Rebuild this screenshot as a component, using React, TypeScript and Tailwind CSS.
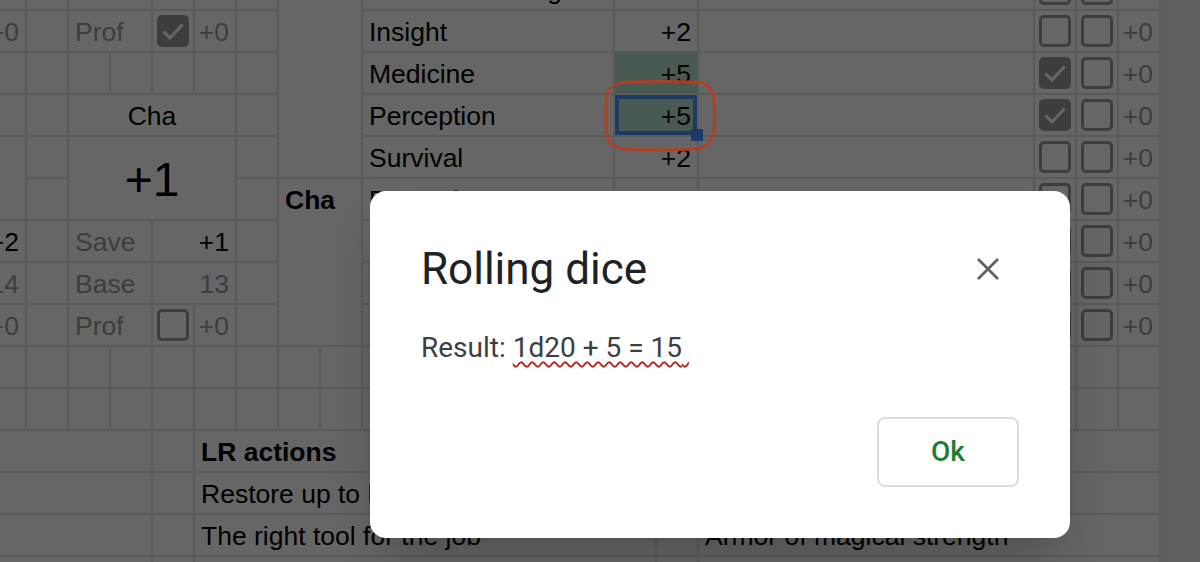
import React from "react";

const cellBase = "border-r-2 border-b-2 border-[#e2e2e2] bg-white min-w-0 overflow-hidden";
const txt = "flex items-end pb-[4px] px-[6px] leading-[30px] whitespace-nowrap";

function Checkbox({ checked }: { checked?: boolean }) {
  return (
    <div
      className={
        checked
          ? "w-[32px] h-[32px] rounded-[5px] border-[3px] border-[#999999] bg-[#999999] flex items-center justify-center"
          : "w-[32px] h-[32px] rounded-[5px] border-[3px] border-[#999999] flex items-center justify-center"
      }
    >
      {checked && (
        <svg width="26" height="26" viewBox="0 0 26 26">
          <path d="M3.5 13.5 L10 20 L22.5 6.5" fill="none" stroke="#ffffff" strokeWidth="3" />
        </svg>
      )}
    </div>
  );
}

function Cell({ className, children }: { className: string; children?: React.ReactNode }) {
  return <div className={`${cellBase} ${className}`}>{children}</div>;
}

function CbCell({ className, checked }: { className: string; checked?: boolean }) {
  return (
    <div className={`${cellBase} flex items-center justify-center ${className}`}>
      <Checkbox checked={checked} />
    </div>
  );
}

function SkillRow({
  row,
  name,
  value,
  c1,
  c2,
}: {
  row: string;
  name: string;
  value: string;
  c1?: boolean;
  c2?: boolean;
}) {
  return (
    <>
      <Cell className={`col-start-10 col-span-6 ${row} ${txt}`}>{name}</Cell>
      <Cell className={`col-start-16 col-span-2 ${row} ${txt} justify-end`}>{value}</Cell>
      <Cell className={`col-start-18 col-span-8 ${row}`} />
      <CbCell className={`col-start-26 ${row}`} checked={c1} />
      <CbCell className={`col-start-27 ${row}`} checked={c2} />
      <Cell className={`col-start-28 ${row} ${txt} justify-end text-[#999999]`}>+0</Cell>
    </>
  );
}

export default function App() {
  const fillers = Array.from({ length: 420 }, (_, i) => (
    <div key={i} className="border-r-2 border-b-2 border-[#e2e2e2] bg-white" />
  ));

  return (
    <div className="relative w-[1200px] h-[562px] overflow-hidden bg-[#eeeeee] font-['Liberation_Sans',Arial,sans-serif] text-[26.5px] text-black">
      <div className="ml-[-15px] mt-[-31px] grid grid-cols-[repeat(28,42px)] auto-rows-[42px] w-max">
        {/* Row 1 (partial) */}
        <Cell className={`col-start-1 row-start-1 ${txt} justify-end text-[#999999]`}>10</Cell>
        <Cell className={`col-start-3 col-span-2 row-start-1 ${txt} text-[#999999]`}>Base</Cell>
        <Cell className={`col-start-6 row-start-1 ${txt} justify-end text-[#999999]`}>+0</Cell>
        <Cell className="col-start-8 col-span-2 row-start-1 row-span-5" />
        <SkillRow row="row-start-1" name="Animal Handling" value="+2" />

        {/* Row 2 */}
        <Cell className={`col-start-1 row-start-2 ${txt} justify-end text-[#999999]`}>+0</Cell>
        <Cell className={`col-start-3 col-span-2 row-start-2 ${txt} text-[#999999]`}>Prof</Cell>
        <CbCell className="col-start-5 row-start-2" checked />
        <Cell className={`col-start-6 row-start-2 ${txt} justify-end text-[#999999]`}>+0</Cell>
        <SkillRow row="row-start-2" name="Insight" value="+2" />

        {/* Row 3 */}
        <Cell className={`col-start-10 col-span-6 row-start-3 ${txt}`}>Medicine</Cell>
        <div className={`border-r-2 border-b-2 border-[#e2e2e2] bg-[#b7e1cd] col-start-16 col-span-2 row-start-3 ${txt} justify-end`}>
          +5
        </div>
        <Cell className="col-start-18 col-span-8 row-start-3" />
        <CbCell className="col-start-26 row-start-3" checked />
        <CbCell className="col-start-27 row-start-3" />
        <Cell className={`col-start-28 row-start-3 ${txt} justify-end text-[#999999]`}>+0</Cell>

        {/* Row 4 */}
        <Cell className={`col-start-3 col-span-4 row-start-4 ${txt} justify-center`}>Cha</Cell>
        <Cell className={`col-start-10 col-span-6 row-start-4 ${txt}`}>Perception</Cell>
        <div className={`relative border-r-2 border-b-2 border-[#e2e2e2] bg-[#b7e1cd] col-start-16 col-span-2 row-start-4 ${txt} justify-end`}>
          +5
          <div className="absolute inset-[0px] border-[4px] border-[#4a8fff]" />
        </div>
        <Cell className="col-start-18 col-span-8 row-start-4" />
        <CbCell className="col-start-26 row-start-4" checked />
        <CbCell className="col-start-27 row-start-4" />
        <Cell className={`col-start-28 row-start-4 ${txt} justify-end text-[#999999]`}>+0</Cell>

        {/* Rows 5-6 merged */}
        <Cell className="col-start-1 row-start-5 row-span-2" />
        <Cell className="col-start-3 col-span-4 row-start-5 row-span-2 flex items-center justify-center pt-[4px] text-[48px] leading-[56px]">
          +1
        </Cell>
        <SkillRow row="row-start-5" name="Survival" value="+2" />

        {/* Cha block */}
        <Cell className="col-start-8 col-span-2 row-start-6 row-span-4">
          <div className={`h-[40px] ${txt} font-bold`}>Cha</div>
        </Cell>
        <SkillRow row="row-start-6" name="Deception" value="+1" />

        {/* Row 7 */}
        <Cell className={`col-start-1 row-start-7 ${txt} justify-end`}>+2</Cell>
        <Cell className={`col-start-3 col-span-2 row-start-7 ${txt} text-[#999999]`}>Save</Cell>
        <Cell className={`col-start-5 col-span-2 row-start-7 ${txt} justify-end`}>+1</Cell>
        <SkillRow row="row-start-7" name="Intimidation" value="+1" />

        {/* Row 8 */}
        <Cell className={`col-start-1 row-start-8 ${txt} justify-end text-[#999999]`}>14</Cell>
        <Cell className={`col-start-3 col-span-2 row-start-8 ${txt} text-[#999999]`}>Base</Cell>
        <Cell className={`col-start-5 col-span-2 row-start-8 ${txt} justify-end text-[#999999]`}>13</Cell>
        <SkillRow row="row-start-8" name="Performance" value="+1" />

        {/* Row 9 */}
        <Cell className={`col-start-1 row-start-9 ${txt} justify-end text-[#999999]`}>+0</Cell>
        <Cell className={`col-start-3 col-span-2 row-start-9 ${txt} text-[#999999]`}>Prof</Cell>
        <CbCell className="col-start-5 row-start-9" />
        <Cell className={`col-start-6 row-start-9 ${txt} justify-end text-[#999999]`}>+0</Cell>
        <SkillRow row="row-start-9" name="Persuasion" value="+1" />

        {/* Rows 12-15 */}
        <Cell className="col-start-1 col-span-4 row-start-12" />
        <Cell className={`col-start-6 col-span-11 row-start-12 ${txt} font-bold`}>LR actions</Cell>
        <Cell className={`col-start-18 col-span-11 row-start-12 ${txt} font-bold`}>Items</Cell>

        <Cell className="col-start-1 col-span-4 row-start-13" />
        <Cell className={`col-start-6 col-span-11 row-start-13 ${txt}`}>Restore up to half your spell slots</Cell>
        <Cell className={`col-start-18 col-span-11 row-start-13 ${txt}`}>Cloak of elvenkind</Cell>

        <Cell className="col-start-1 col-span-4 row-start-14" />
        <Cell className={`col-start-6 col-span-11 row-start-14 ${txt}`}>The right tool for the job</Cell>
        <Cell className={`col-start-18 col-span-11 row-start-14 ${txt}`}>Armor of magical strength</Cell>

        <Cell className="col-start-1 col-span-4 row-start-15" />
        <Cell className="col-start-6 col-span-11 row-start-15" />
        <Cell className="col-start-18 col-span-11 row-start-15" />

        {fillers}
      </div>

      {/* fill handle */}
      <div className="absolute left-[691px] top-[129px] w-[12px] h-[12px] bg-[#4a8fff]" />

      {/* dim overlay */}
      <div className="absolute inset-0 bg-black/60" />

      {/* red annotation ring */}
      <svg className="absolute left-[602px] top-[78px]" width="116" height="76" viewBox="0 0 116 76">
        <path
          d="M24 4 C50 3 80 3.5 93 4 C106 4.5 112 12 112 24 L112.5 40 C112.5 58 110 69 94 71 C70 72.5 45 72 22 71 C9 70 4 63 4 50 L4 25 C4 12 11 4.5 24 4 Z"
          fill="none"
          stroke="#bb3b1c"
          strokeWidth="2.5"
        />
      </svg>

      {/* dialog */}
      <div className="absolute left-[370px] top-[191px] w-[700px] h-[347px] bg-white rounded-[16px] shadow-2xl font-['Roboto',sans-serif] flex flex-col pl-[51px] pr-[51px] pt-[52px] pb-[51px]">
        <div className="flex items-center justify-between h-[52px]">
          <div className="text-[44px] leading-[52px] text-[#202124]">Rolling dice</div>
          <div className="w-[48px] h-[48px] mr-[7px] flex items-center justify-center">
            <svg width="22" height="22" viewBox="0 0 22 22">
              <path d="M1 1 L21 21 M21 1 L1 21" stroke="#5f6368" strokeWidth="2.8" fill="none" />
            </svg>
          </div>
        </div>
        <div className="mt-[35px] text-[28px] leading-[36px] text-[#3c4043] whitespace-nowrap">
          Result:{" "}
          <span className="underline decoration-wavy decoration-[#b3261e] decoration-[1.5px] underline-offset-[4px]">
            1d20 + 5 = 15{"\u00a0"}
          </span>
        </div>
        <div className="mt-[51px] flex justify-end">
          <div className="w-[142px] h-[70px] border-2 border-[#dadce0] rounded-[8px] flex items-center justify-center text-[28px] font-medium text-[#1e7e34]">
            Ok
          </div>
        </div>
      </div>
    </div>
  );
}
